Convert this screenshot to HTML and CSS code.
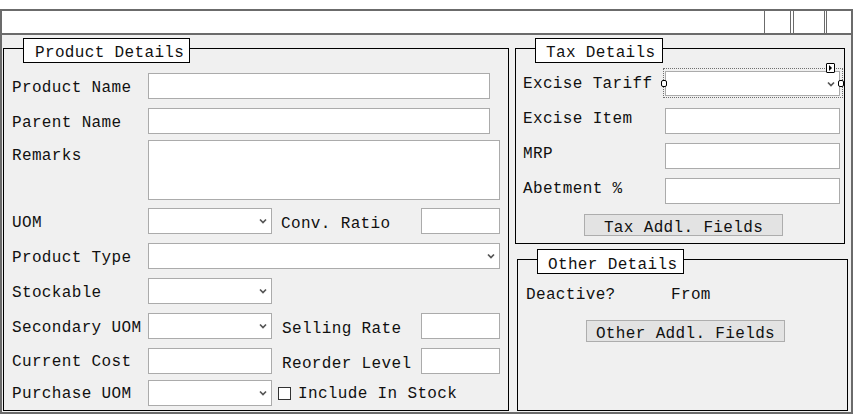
FILE: index.html
```html
<!DOCTYPE html>
<html>
<head>
<meta charset="utf-8">
<link rel="stylesheet" href="styles.css">
</head>
<body>
<div class="frame">
  <div class="titlebar">
    <div class="tb-main"></div>
    <div class="tb-c1"></div>
    <div class="tb-c2"></div>
    <div class="tb-c3"></div>
  </div>
  <div class="content">
    <section class="group product">
      <div class="legend lg-product">Product Details</div>
      <div class="row">
        <span class="lbl">Product Name</span>
        <div class="inp w342"></div>
      </div>
      <div class="row mt9">
        <span class="lbl">Parent Name</span>
        <div class="inp w342"></div>
      </div>
      <div class="row row-tall mt6">
        <span class="lbl lbl-top">Remarks</span>
        <div class="inp w352 h60"></div>
      </div>
      <div class="row mt8">
        <span class="lbl">UOM</span>
        <div class="inp sel w124"><svg class="chev" width="8" height="6" viewBox="0 0 8 6"><path d="M1 1.5 L4 4.5 L7 1.5" /></svg></div>
        <span class="lbl2 ml9">Conv. Ratio</span>
        <div class="inp w79"></div>
      </div>
      <div class="row mt9">
        <span class="lbl">Product Type</span>
        <div class="inp sel w352"><svg class="chev" width="8" height="6" viewBox="0 0 8 6"><path d="M1 1.5 L4 4.5 L7 1.5" /></svg></div>
      </div>
      <div class="row mt9">
        <span class="lbl">Stockable</span>
        <div class="inp sel w124"><svg class="chev" width="8" height="6" viewBox="0 0 8 6"><path d="M1 1.5 L4 4.5 L7 1.5" /></svg></div>
      </div>
      <div class="row mt9">
        <span class="lbl">Secondary UOM</span>
        <div class="inp sel w124"><svg class="chev" width="8" height="6" viewBox="0 0 8 6"><path d="M1 1.5 L4 4.5 L7 1.5" /></svg></div>
        <span class="lbl2 ml10">Selling Rate</span>
        <div class="inp w79"></div>
      </div>
      <div class="row mt9">
        <span class="lbl lbl-hi">Current Cost</span>
        <div class="inp w124"></div>
        <span class="lbl2 ml10">Reorder Level</span>
        <div class="inp w79"></div>
      </div>
      <div class="row mt6">
        <span class="lbl lbl-hi">Purchase UOM</span>
        <div class="inp sel w124"><svg class="chev" width="8" height="6" viewBox="0 0 8 6"><path d="M1 1.5 L4 4.5 L7 1.5" /></svg></div>
        <span class="check"></span>
        <span class="check-lbl">Include In Stock</span>
      </div>
    </section>

    <div class="right-col">
      <section class="group tax">
        <div class="legend lg-tax">Tax Details</div>
        <div class="trow trow-first">
          <span class="tlbl tlbl-first">Excise Tariff</span>
          <div class="tariff">
            <div class="inp sel tsel"><svg class="chev" width="8" height="6" viewBox="0 0 8 6"><path d="M1 1.5 L4 4.5 L7 1.5" /></svg></div>
            <div class="sel-frame"></div>
            <div class="handle h-left"></div>
            <div class="handle h-right"></div>
            <div class="smart-tag"><svg width="7" height="8" viewBox="0 0 7 8"><path d="M2 1 L5 4 L2 7 Z" /></svg></div>
          </div>
        </div>
        <div class="trow mt12">
          <span class="tlbl">Excise Item</span>
          <div class="inp w175"></div>
        </div>
        <div class="trow mt9">
          <span class="tlbl">MRP</span>
          <div class="inp w175"></div>
        </div>
        <div class="trow mt9">
          <span class="tlbl">Abetment %</span>
          <div class="inp w175"></div>
        </div>
        <div class="btn btn-tax">Tax Addl. Fields</div>
      </section>

      <section class="group other">
        <div class="legend lg-other">Other Details</div>
        <div class="orow">
          <span class="olbl">Deactive?</span>
          <span>From</span>
        </div>
        <div class="btn btn-other">Other Addl. Fields</div>
      </section>
    </div>
  </div>
</div>
</body>
</html>
```

FILE: styles.css
```css
html, body {
  margin: 0;
  padding: 0;
  background: #ffffff;
}

body {
  font-family: "Courier New", "Liberation Mono", monospace;
  font-size: 16px;
  letter-spacing: 0.35px;
  color: #111111;
}

.frame {
  margin-top: 9px;
  width: 853px;
  height: 405px;
  box-sizing: border-box;
  border: 2px solid #6b6b6b;
  background: #f0f0f0;
  display: flex;
  flex-direction: column;
}

.titlebar {
  height: 24px;
  flex: none;
  box-sizing: border-box;
  border-bottom: 2px solid #6b6b6b;
  background: #ffffff;
  display: flex;
}

.tb-main { flex: 1; }

.tb-c1 {
  width: 27px;
  box-sizing: border-box;
  border-left: 1px solid #6b6b6b;
  border-right: 1px solid #6b6b6b;
}

.tb-c2 {
  width: 32px;
  margin-left: 2px;
  box-sizing: border-box;
  border-left: 1px solid #6b6b6b;
  border-right: 1px solid #6b6b6b;
}

.tb-c3 {
  width: 25px;
  margin-left: 1px;
  box-sizing: border-box;
  border-left: 1px solid #6b6b6b;
}

.content {
  flex: 1;
  display: flex;
  align-items: flex-start;
}

.group {
  position: relative;
  box-sizing: border-box;
  border: 1px solid #000000;
}

.legend {
  position: absolute;
  top: -11px;
  left: 19px;
  height: 25px;
  box-sizing: border-box;
  border: 1px solid #000000;
  background: #ffffff;
  line-height: 18px;
  padding-top: 5px;
  white-space: nowrap;
}

.lg-product { width: 167px; padding-left: 11px; }
.lg-tax { width: 128px; padding-left: 10px; }
.lg-other { width: 147px; padding-left: 10px; padding-top: 6px; }

/* Product details */
.product {
  margin: 13px 0 0 1px;
  width: 506px;
  height: 363px;
  padding: 24px 0 0 8px;
  display: flex;
  flex-direction: column;
}

.row {
  display: flex;
  align-items: flex-start;
  height: 26px;
}

.row-tall {
  height: 60px;
}

.mt6 { margin-top: 6px; }
.mt8 { margin-top: 8px; }
.mt9 { margin-top: 9px; }
.mt12 { margin-top: 12px; }
.ml9 { margin-left: 9px; }
.ml10 { margin-left: 10px; }

.lbl {
  width: 136px;
  flex: none;
  white-space: nowrap;
  line-height: 18px;
  padding-top: 6px;
}

.lbl-hi { padding-top: 5px; }
.lbl-top { padding-top: 7px; }

.lbl2 {
  width: 140px;
  flex: none;
  white-space: nowrap;
  line-height: 18px;
  padding-top: 7px;
}

.ml10.lbl2 { width: 139px; }

.inp {
  flex: none;
  box-sizing: border-box;
  height: 26px;
  background: #ffffff;
  border: 1px solid #ababab;
}

.w342 { width: 342px; }
.w352 { width: 352px; }
.w124 { width: 124px; }
.w79 { width: 79px; }
.w175 { width: 175px; }
.h60 { height: 60px; }

.sel {
  display: flex;
  align-items: center;
  justify-content: flex-end;
  padding-right: 4px;
}

.chev path {
  fill: none;
  stroke: #555555;
  stroke-width: 1.7;
}

.check {
  flex: none;
  width: 13px;
  height: 13px;
  margin: 7px 0 0 6px;
  box-sizing: border-box;
  border: 1px solid #333333;
  background: #ffffff;
}

.check-lbl {
  margin-left: 7px;
  white-space: nowrap;
  line-height: 18px;
  padding-top: 5px;
}

/* Right column */
.right-col {
  margin: 13px 0 0 6px;
  display: flex;
  flex-direction: column;
}

.tax {
  width: 330px;
  height: 196px;
  padding-left: 7px;
  display: flex;
  flex-direction: column;
}

.trow {
  display: flex;
  align-items: flex-start;
  height: 26px;
}

.trow-first {
  margin-top: 22px;
  height: 25px;
}

.tlbl {
  width: 142px;
  flex: none;
  white-space: nowrap;
  line-height: 18px;
  padding-top: 2px;
}

.tlbl-first { padding-top: 4px; }

.tariff {
  position: relative;
  width: 175px;
  height: 25px;
  flex: none;
}

.tsel {
  width: 175px;
  height: 25px;
}

.sel-frame {
  position: absolute;
  left: -2px;
  top: -3px;
  right: -3px;
  bottom: -2px;
  border: 1px dotted #6f6f6f;
}

.handle {
  position: absolute;
  top: 9px;
  width: 6px;
  height: 7px;
  box-sizing: border-box;
  border: 1px solid #000000;
  border-radius: 2px;
  background: #ffffff;
}

.h-left { left: -4px; }
.h-right { left: 173px; }

.smart-tag {
  position: absolute;
  left: 161px;
  top: -8px;
  width: 9px;
  height: 10px;
  box-sizing: border-box;
  border: 1px solid #000000;
  border-radius: 1px;
  background: #ffffff;
  display: flex;
  align-items: center;
  justify-content: center;
}

.smart-tag svg { display: block; }
.smart-tag path { fill: #000000; }

.btn {
  box-sizing: border-box;
  width: 199px;
  height: 22px;
  background: #e3e3e3;
  border: 1px solid #adadad;
  text-align: center;
  line-height: 18px;
  padding-top: 4px;
  white-space: nowrap;
}

.btn-tax {
  margin: 10px 0 0 61px;
}

.other {
  width: 331px;
  height: 152px;
  margin: 15px 0 0 2px;
  padding-left: 8px;
  display: flex;
  flex-direction: column;
}

.orow {
  margin-top: 25px;
  height: 20px;
  display: flex;
  align-items: center;
  white-space: nowrap;
}

.olbl {
  width: 145px;
  flex: none;
}

.btn-other {
  margin: 15px 0 0 60px;
}
```
